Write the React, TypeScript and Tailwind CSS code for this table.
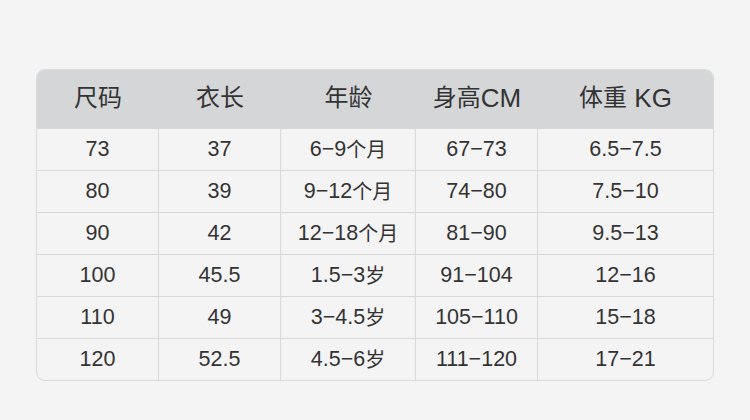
import React from "react";

const headers = ["尺码", "衣长", "年龄", "身高CM", "体重 KG"];
const rows = [
  ["73", "37", "6-9个月", "67-73", "6.5-7.5"],
  ["80", "39", "9-12个月", "74-80", "7.5-10"],
  ["90", "42", "12-18个月", "81-90", "9.5-13"],
  ["100", "45.5", "1.5-3岁", "91-104", "12-16"],
  ["110", "49", "3-4.5岁", "105-110", "15-18"],
  ["120", "52.5", "4.5-6岁", "111-120", "17-21"],
];

const font = {
  fontFamily: '"Liberation Sans", Arial, "Noto Sans CJK SC", sans-serif',
};

function Mixed({ text, cjk }: { text: string; cjk: string }) {
  const parts = text.match(/[\u4e00-\u9fff]+|[^\u4e00-\u9fff]+/g) || [];
  return (
    <>
      {parts.map((p, i) =>
        /[\u4e00-\u9fff]/.test(p) ? (
          <span key={i} className={cjk}>
            {p}
          </span>
        ) : (
          <span key={i}>{p}</span>
        )
      )}
    </>
  );
}

export default function App() {
  return (
    <div className="w-[750px] h-[420px] bg-[#f4f4f4] pt-[69px] pl-[36px]" style={font}>
      <div className="w-[678px] rounded-[9px] border border-[#dadada] overflow-hidden">
        <div className="grid grid-cols-[122px_122px_135px_122px_175px] bg-[#d5d6d8] h-[58px]">
          {headers.map((h) => (
            <div key={h} className="flex items-center justify-center pb-[2px] text-[26px] leading-none text-[#333] whitespace-pre">
              <Mixed text={h} cjk="text-[24px]" />
            </div>
          ))}
        </div>
        {rows.map((r, ri) => (
          <div
            key={ri}
            className="grid grid-cols-[122px_122px_135px_122px_175px] h-[42px] border-t border-[#d9d9d9]"
          >
            {r.map((c, ci) => (
              <div
                key={ci}
                className={`flex items-center justify-center text-[21.5px] leading-none text-[#333] ${
                  ci < 4 ? "border-r border-[#d9d9d9]" : ""
                }`}
              >
                <Mixed text={c.replace(/-/g, "−")} cjk="text-[20px]" />
              </div>
            ))}
          </div>
        ))}
      </div>
    </div>
  );
}
